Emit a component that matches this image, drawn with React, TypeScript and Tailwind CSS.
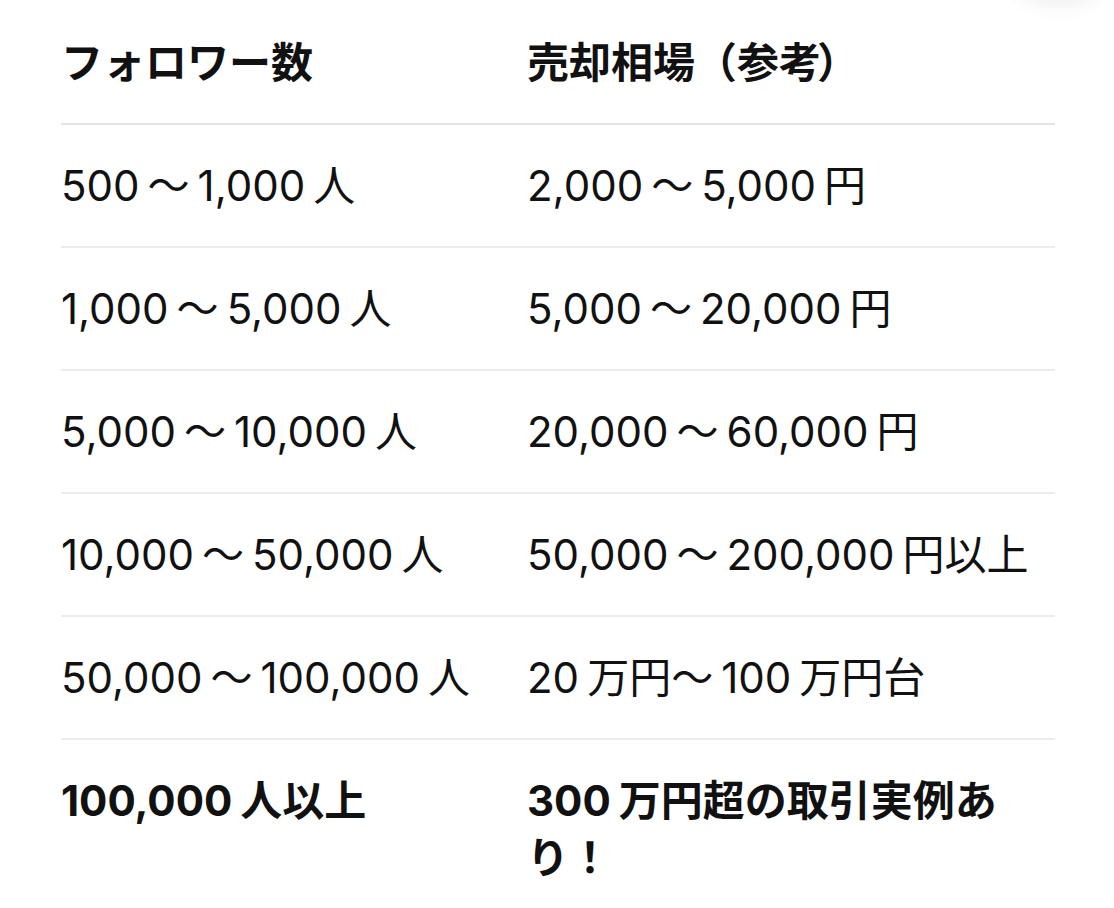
import { Fragment } from 'react';

// フォロワー数と売却相場の対応表
const rows = [
  { followers: '500～1,000人', price: '2,000～5,000円' },
  { followers: '1,000～5,000人', price: '5,000～20,000円' },
  { followers: '5,000～10,000人', price: '20,000～60,000円' },
  { followers: '10,000～50,000人', price: '50,000～200,000円以上' },
  { followers: '50,000～100,000人', price: '20万円～100万円台' },
];

// 数字と和文の境目に少しだけ隙間を入れる
const Spaced = ({ text }: { text: string }) => {
  const parts = text.split(/(\d[\d,]*)/).filter((p) => p !== '');
  return (
    <>
      {parts.map((p, i) => {
        const isNum = /^\d/.test(p);
        if (!isNum) return <Fragment key={i}>{p}</Fragment>;
        const before = i > 0;
        const after = i < parts.length - 1;
        return (
          <span
            key={i}
            className={`${before ? 'ml-[8px]' : ''} ${after ? 'mr-[8px]' : ''}`}
          >
            {p}
          </span>
        );
      })}
    </>
  );
};

const Cell = ({ children, bold, right }: { children: React.ReactNode; bold?: boolean; right?: boolean }) => (
  <div className={`py-8 ${right ? 'pr-5' : 'pr-4'} ${bold ? 'font-bold' : 'font-normal'}`}>
    {children}
  </div>
);

export default function App() {
  return (
    <div
      className="relative min-h-screen bg-white overflow-hidden text-[#111111] text-[42px] leading-[57px]"
      style={{ fontFamily: 'Inter, "Noto Sans CJK JP", sans-serif' }}
    >
      {/* 右上のかすかな影 */}
      <div className="absolute -top-[70px] right-[10px] w-[90px] h-[70px] rounded-full shadow-[0_0_24px_rgba(0,0,0,0.10)] bg-white" />

      <div className="ml-[61px] mr-[59px] pt-[2px]">
        <div className="grid grid-cols-[466px_1fr] border-b-2 border-[#e4e4e4]">
          <Cell bold>フォロワー数</Cell>
          <Cell bold right>
            売却相場（参考<span className="-ml-[4px]">）</span>
          </Cell>
        </div>

        {rows.map((r) => (
          <div key={r.followers} className="grid grid-cols-[466px_1fr] border-b-2 border-[#ececec]">
            <Cell>
              <Spaced text={r.followers} />
            </Cell>
            <Cell right>
              <Spaced text={r.price} />
            </Cell>
          </div>
        ))}

        <div className="grid grid-cols-[466px_1fr]">
          <Cell bold>
            <Spaced text="100,000人以上" />
          </Cell>
          <Cell bold right>
            <Spaced text="300万円超の取引実例あり！" />
          </Cell>
        </div>
      </div>
    </div>
  );
}
